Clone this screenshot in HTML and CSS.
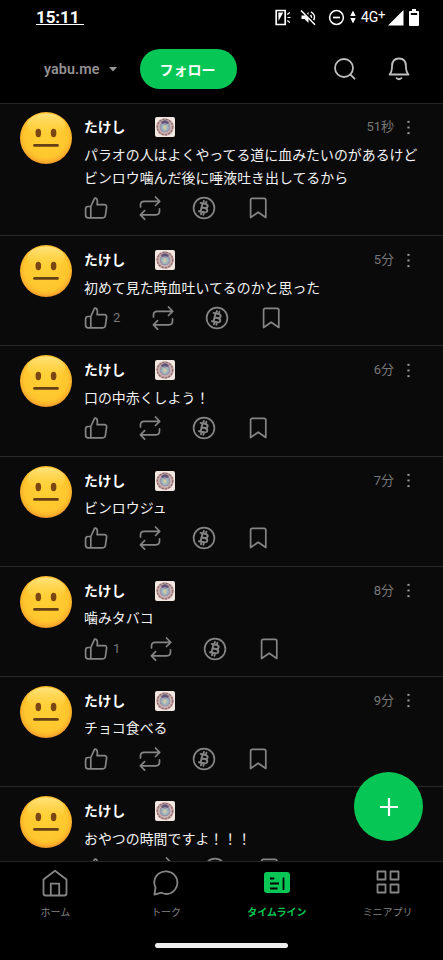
FILE: index.html
```html
<!DOCTYPE html>
<html lang="ja">
<head>
<meta charset="utf-8">
<title>タイムライン</title>
<link rel="stylesheet" href="styles.css">
</head>
<body>
<svg class="defs" width="0" height="0" aria-hidden="true">
  <defs>
    <radialGradient id="skin" cx="50%" cy="46%" r="54%">
      <stop offset="0" stop-color="#ffd034"/><stop offset=".76" stop-color="#ffc72d"/><stop offset=".9" stop-color="#fbb42b"/><stop offset="1" stop-color="#ed952c"/>
    </radialGradient>
    <linearGradient id="shine" x2="0" y2="1"><stop offset="0" stop-color="#fff0a0" stop-opacity=".7"/><stop offset="1" stop-color="#ffd94c" stop-opacity="0"/></linearGradient>
    <symbol id="face" viewBox="0 0 52 52">
      <circle cx="26" cy="26" r="26" fill="url(#skin)"/>
      <ellipse cx="26" cy="13" rx="19" ry="11.5" fill="url(#shine)"/>
      <ellipse cx="18.3" cy="21" rx="2.8" ry="4.2" fill="#7a4712"/><ellipse cx="33.6" cy="21" rx="2.8" ry="4.2" fill="#7a4712"/>
      <path d="M14.5 33.4h23" stroke="#654016" stroke-width="2.7" stroke-linecap="round"/>
    </symbol>
    <symbol id="badge" viewBox="0 0 20 20">
      <rect width="20" height="20" rx="2" fill="#f3e7e1"/>
      <circle cx="10" cy="10" r="8.7" fill="#c1a09e"/>
      <circle cx="10" cy="10" r="7.8" fill="none" stroke="#8b6872" stroke-width="1.2" stroke-dasharray="2 1.4"/>
      <circle cx="10" cy="10" r="6" fill="#9b91aa" stroke="#e0c8b9" stroke-width=".8"/>
      <path d="M6 5l4-2 4 2-1 2-3-1-3 1z" fill="#605578"/>
      <path d="M7 7l3 1 3-1 1 4-2 3H8l-2-3z" fill="#9db9bd"/><path d="M9 8l3 2-2 3-2-2z" fill="#d4c7a5"/>
    </symbol>
    <symbol id="like" viewBox="0 0 24 24"><path d="M6.800 10.500l3.500-7.700c.4-.8 1.200-.9 2-.3 1.400 1.200 1.200 3.900.8 6.100h7.200c1.600 0 2.500 1 2.300 2.600l-1.200 8.300c-.2 1.500-1 2.300-2.500 2.300H6.800M6.800 10.500H4.200c-1.500 0-2.600 1-2.600 2.500v6.300c0 1.500 1.100 2.500 2.600 2.500h2.600z"/></symbol>
    <symbol id="repost" viewBox="0 0 24 24"><path d="M17.500 1l4.200 4.300-4.200 4.200M2.500 11V9c0-2.400 1.300-3.700 3.600-3.700h15.600M6.600 23.100l-4.200-4.300 4.200-4.200M21.500 12.800v2.300c0 2.400-1.300 3.700-3.600 3.700H2.400"/></symbol>
    <symbol id="zap" viewBox="0 0 24 24"><circle cx="12" cy="12" r="10.400"/><path stroke-width="1.9" d="M8.600 6.900l5.200 1.200c2.900.8 2.300 4.400-1 3.900l-2.500-.5 2.500.5c3.800.9 3 5-.5 4.300l-5.400-1.100M10.500 7.600l-1.900 7.700M11.900 5l-.6 2.400M14.400 5.600l-.6 2.500M9.500 15.800L9 18.300M12 16.300l-.6 2.500"/></symbol>
    <symbol id="save" viewBox="0 0 24 24"><path d="M4.600 21.500V4c0-1.100.6-1.700 1.700-1.700h11.800c1.100 0 1.700.6 1.700 1.700v17.500l-7.600-5.300z"/></symbol>
  </defs>
</svg>
<div class="app">
  <div class="status">
    <span class="clock">15:11&nbsp;</span>
    <div class="signals">
      <svg width="17" height="17" viewBox="0 0 17 17"><path d="M1.200 1.500h9v14h-9z" fill="none" stroke="#fff" stroke-width="1.700"/><path d="M3.300 3.500h5L3.500 12z" fill="#fff"/><path d="M12.300 5.500l2.500-2M12.500 8.500h3M12.300 11.500l2.500 2" stroke="#fff" stroke-width="1.200"/></svg>
      <svg class="mute" width="17" height="17" viewBox="0 0 17 17"><path d="M1.500 6.500h3l4-3.500v11l-4-4h-3z" fill="#fff"/><path d="M10.500 6q2 2.500 0 5M11 2.800q6 3.500 2 9.500" fill="none" stroke="#fff" stroke-width="1.400"/><path d="M2 1.200l14 14.300" stroke="#000" stroke-width="3"/><path d="M1 1.500l14 14.300" stroke="#fff" stroke-width="1.500"/></svg>
      <svg class="dnd" width="17" height="17" viewBox="0 0 17 17"><circle cx="8.500" cy="8.500" r="6.900" fill="none" stroke="#fff" stroke-width="1.500"/><path d="M5 8.500h7" stroke="#fff" stroke-width="1.700"/></svg>
      <svg class="arrows" width="6" height="14" viewBox="0 0 6 14"><path d="M.3 6L3 .5 5.700 6zM.3 8h5.400L3 13.500z" fill="#fff"/></svg>
      <span class="network">4G<sup>+</sup></span>
      <svg class="bars" width="16" height="16" viewBox="0 0 16 16"><path d="M0 15.500L15.500 0v15.500z" fill="#fff"/></svg>
      <svg class="battery" width="10" height="17" viewBox="0 0 10 17"><path d="M3 0h4v2h2q1 0 1 1v13q0 1-1 1H1q-1 0-1-1V3q0-1 1-1h2z" fill="#fff"/><path d="M1.800 4h6.400v2H1.800z" fill="#000"/></svg>
    </div>
  </div>
  <header class="topbar">
    <span class="relay">yabu.me</span>
    <svg class="caret" width="8" height="5" viewBox="0 0 8 5"><path d="M0 0h8L4 4.500z" fill="#969696"/></svg>
    <button class="follow">フォロー</button>
    <svg class="tool search" width="24" height="24" viewBox="0 0 24 24"><circle cx="11" cy="11" r="9"/><path d="M17.300 17.500l4.200 4.200"/></svg>
    <svg class="tool" width="24" height="24" viewBox="0 0 24 24"><path d="M2.500 17.500C4.400 15.500 5 13 5 9.500 5 4.600 7.600 1.500 12 1.500s7 3.100 7 8c0 3.500.6 6 2.500 8zM9.600 21.200q2.400 2.200 4.800 0"/></svg>
  </header>
  <main class="feed">
    <article class="post">
      <svg class="avatar"><use href="#face"/></svg>
      <div class="content"><div class="meta"><b>たけし</b><svg class="badge"><use href="#badge"/></svg><time>51秒</time><i class="more"></i></div>
      <p>パラオの人はよくやってる道に血みたいのがあるけど<br>ビンロウ噛んだ後に唾液吐き出してるから</p>
      <div class="actions"><svg><use href="#like"/></svg><svg><use href="#repost"/></svg><svg><use href="#zap"/></svg><svg><use href="#save"/></svg></div></div>
    </article>
    <article class="post">
      <svg class="avatar"><use href="#face"/></svg>
      <div class="content"><div class="meta"><b>たけし</b><svg class="badge"><use href="#badge"/></svg><time>5分</time><i class="more"></i></div>
      <p>初めて見た時血吐いてるのかと思った</p>
      <div class="actions"><svg><use href="#like"/></svg><span class="count">2</span><svg><use href="#repost"/></svg><svg><use href="#zap"/></svg><svg><use href="#save"/></svg></div></div>
    </article>
    <article class="post">
      <svg class="avatar"><use href="#face"/></svg>
      <div class="content"><div class="meta"><b>たけし</b><svg class="badge"><use href="#badge"/></svg><time>6分</time><i class="more"></i></div>
      <p>口の中赤くしよう！</p>
      <div class="actions"><svg><use href="#like"/></svg><svg><use href="#repost"/></svg><svg><use href="#zap"/></svg><svg><use href="#save"/></svg></div></div>
    </article>
    <article class="post">
      <svg class="avatar"><use href="#face"/></svg>
      <div class="content"><div class="meta"><b>たけし</b><svg class="badge"><use href="#badge"/></svg><time>7分</time><i class="more"></i></div>
      <p>ビンロウジュ</p>
      <div class="actions"><svg><use href="#like"/></svg><svg><use href="#repost"/></svg><svg><use href="#zap"/></svg><svg><use href="#save"/></svg></div></div>
    </article>
    <article class="post">
      <svg class="avatar"><use href="#face"/></svg>
      <div class="content"><div class="meta"><b>たけし</b><svg class="badge"><use href="#badge"/></svg><time>8分</time><i class="more"></i></div>
      <p>噛みタバコ</p>
      <div class="actions"><svg><use href="#like"/></svg><span class="count one">1</span><svg><use href="#repost"/></svg><svg><use href="#zap"/></svg><svg><use href="#save"/></svg></div></div>
    </article>
    <article class="post">
      <svg class="avatar"><use href="#face"/></svg>
      <div class="content"><div class="meta"><b>たけし</b><svg class="badge"><use href="#badge"/></svg><time>9分</time><i class="more"></i></div>
      <p>チョコ食べる</p>
      <div class="actions"><svg><use href="#like"/></svg><svg><use href="#repost"/></svg><svg><use href="#zap"/></svg><svg><use href="#save"/></svg></div></div>
    </article>
    <article class="post">
      <svg class="avatar"><use href="#face"/></svg>
      <div class="content"><div class="meta"><b>たけし</b><svg class="badge"><use href="#badge"/></svg></div>
      <p>おやつの時間ですよ！！！</p>
      <div class="actions"><svg><use href="#like"/></svg><span class="count one"></span><svg><use href="#repost"/></svg><svg><use href="#zap"/></svg><svg><use href="#save"/></svg></div></div>
    </article>
  </main>
  <button class="compose" aria-label="投稿"><svg width="20" height="20" viewBox="0 0 20 20"><path d="M10 1v18M1 10h18" stroke="#fff" stroke-width="2.200"/></svg></button>
  <nav class="tabs">
    <a class="tab"><svg viewBox="0 0 28 28"><path d="M2.500 10.500L14 1.700l11.500 8.800v13.700q0 2.300-2.300 2.300H4.800q-2.300 0-2.300-2.300zM9.800 26.500V14.700h8.400v11.800"/></svg>ホーム</a>
    <a class="tab"><svg viewBox="0 0 28 28"><path d="M2.400 25.600l1.100-7.100C1 13.500 2.600 7.600 6.500 4.700c5-3.700 12-2.900 15.900 1.300 4 4.200 4 10.800.3 15-3.600 4.100-8.800 4.700-13.200 2.700z"/></svg>トーク</a>
    <a class="tab active"><svg viewBox="0 0 28 28"><rect x="1" y="3" width="26" height="21" rx="3" fill="#06c755" stroke="none"/><path d="M7 9.500h4.300M7 14.500h9M7 19.500h7.500M20.500 8.500v12.500" stroke="#000"/></svg>タイムライン</a>
    <a class="tab"><svg viewBox="0 0 28 28"><path d="M3.500 2.500h8v8h-8zM16.500 2.500h8v8h-8zM3.500 15.500h8v8h-8zM16.500 15.500h8v8h-8z"/></svg>ミニアプリ</a>
  </nav>
  <div class="home"><span class="pill"></span></div>
</div>
</body>
</html>
```
FILE: styles.css
```css
* { box-sizing: border-box; }
body { margin: 0; background: #000; color: #f2f2f2; font-family: Roboto, "Noto Sans CJK JP", sans-serif; }
.defs { position: absolute; }
.app { position: relative; width: 443px; height: 960px; display: flex; flex-direction: column; overflow: hidden; }
.status { height: 35px; flex: none; display: flex; align-items: center; justify-content: space-between; padding: 0 24px 0 36px; }
.clock { font-size: 17px; font-weight: 700; line-height: 20px; letter-spacing: -.1px; color: #fff; border-bottom: 1px solid #fff; height: 18px; width: 48px; margin-top: -3px; }
.signals { display: flex; align-items: center; }
.mute { margin-left: 8px; }
.dnd { margin-left: 11px; }
.arrows { margin-left: 5px; margin-top: -2px; }
.network { font-size: 14px; line-height: 17px; margin-left: 5px; width: 25px; letter-spacing: -.2px; white-space: nowrap; color: #fff; }
.network sup { font-size: 13px; line-height: 0; vertical-align: 3px; }
.bars { margin-left: 2px; }
.battery { margin-left: 5px; }
.topbar { height: 69px; flex: none; display: flex; align-items: center; padding: 0 32px 0 44px; border-bottom: 1px solid #252525; }
.relay { color: #929292; font-size: 14.300px; font-weight: 600; width: 65px; letter-spacing: .1px; }
.caret { margin-top: 1px; }
.follow { margin-left: 23px; width: 97px; height: 40px; border: 0; border-radius: 20px; background: #06c755; color: #fff; font: 700 14px "Noto Sans CJK JP", sans-serif; padding: 0 2px 1px 0; }
.tool { fill: none; stroke: #bdbdbd; stroke-width: 1.800; stroke-linejoin: round; stroke-linecap: round; margin-left: 30px; }
.search { margin-left: auto; }
.feed { height: 757px; flex: none; overflow: hidden; background: #0a0a0a; }
.post { height: 110.200px; padding: 9px 20px 0 19.500px; border-top: 1px solid #292929; display: flex; gap: 12.500px; }
.post:first-child { height: 131.200px; padding-top: 8px; border-top: 0; }
.avatar { width: 52px; height: 52px; flex: none; }
.content { flex: 1; min-width: 0; padding-top: 4px; }
.meta { height: 22px; display: flex; align-items: center; }
.meta b { width: 71px; font-size: 13.800px; line-height: 20px; color: #fff; }
.badge { width: 20px; height: 20px; }
time { margin-left: auto; color: #777; font-size: 13px; line-height: 20px; }
.more { width: 3px; height: 17px; margin: 0 13px 0 13px; background: radial-gradient(circle, #9a9a9a .900px, transparent 1.400px) 0 0 / 3px 5.670px; }
p { margin: 5.500px -5px 0 0; font-size: 13.930px; line-height: 23.300px; white-space: nowrap; }
.actions { display: flex; align-items: center; gap: 30px; height: 24px; margin-top: 6px; }
.actions svg { width: 24px; height: 24px; flex: none; fill: none; stroke: #858585; stroke-width: 1.700; stroke-linejoin: round; stroke-linecap: round; }
.count { width: 8px; margin-left: -25px; margin-right: -.200px; color: #777; font-size: 13px; line-height: 20px; }
.one { width: 5.700px; }
.compose { position: absolute; left: 354px; top: 772px; width: 69px; height: 69px; border: 0; border-radius: 50%; background: #06c755; display: grid; place-items: center; padding: 0; }
.tabs { height: 64px; flex: none; border-top: 1px solid #242424; display: grid; grid-template-columns: repeat(4, 1fr); }
.tab { display: flex; flex-direction: column; align-items: center; padding-top: 7px; color: #818181; font-size: 10px; line-height: 16px; }
.tab svg { width: 28px; height: 28px; margin-bottom: 8px; fill: none; stroke: #858585; stroke-width: 1.800; stroke-linejoin: round; }
.active { color: #06c755; font-weight: 700; }
.home { height: 35px; display: flex; justify-content: center; padding-top: 18px; }
.pill { width: 133px; height: 5px; border-radius: 3px; background: #eee; }
```
